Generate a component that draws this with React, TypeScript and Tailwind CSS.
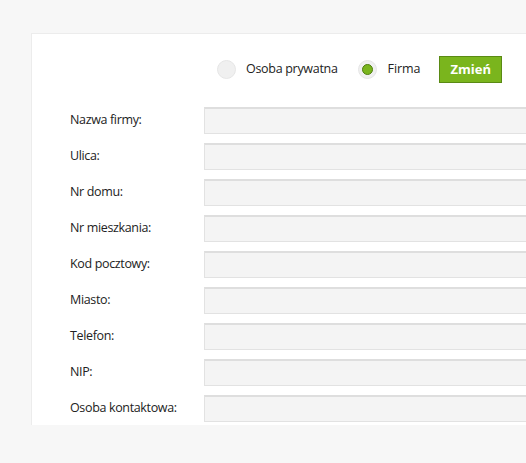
import { useState } from 'react'

const fields = [
  'Nazwa firmy:',
  'Ulica:',
  'Nr domu:',
  'Nr mieszkania:',
  'Kod pocztowy:',
  'Miasto:',
  'Telefon:',
  'NIP:',
  'Osoba kontaktowa:',
]

export default function App() {
  const [kind, setKind] = useState<'private' | 'company'>('company')

  return (
    <div className="w-[526px] h-[463px] overflow-hidden bg-[#f7f7f7] pl-[31px] pt-[33px] font-['Open_Sans',sans-serif] text-[#222]">
      <div className="w-[560px] bg-white border-t border-l border-[#ececec] pb-[3px]">
        <div className="flex items-center h-[27px] mt-[22px] pl-[185px]">
          <button
            onClick={() => setKind('private')}
            className="flex items-center gap-[10px]"
          >
            <span className="w-[19px] h-[19px] rounded-full bg-[#f0f0f0] border border-[#e6e6e6] flex items-center justify-center">
              {kind === 'private' && <span className="w-[10px] h-[10px] rounded-full bg-[#7ab51d] border border-[#5f8f12]" />}
            </span>
            <span className="text-[12.5px] tracking-[-0.3px]">Osoba prywatna</span>
          </button>
          <button
            onClick={() => setKind('company')}
            className="flex items-center gap-[11px] ml-[20px]"
          >
            <span className="w-[19px] h-[19px] rounded-full bg-[#f0f0f0] border border-[#e6e6e6] flex items-center justify-center">
              {kind === 'company' && <span className="w-[11px] h-[11px] rounded-full bg-[#7ab51d] border border-[#4f7d0e]" />}
            </span>
            <span className="text-[12.5px] tracking-[-0.1px]">Firma</span>
          </button>
          <button className="ml-[19px] w-[63px] h-[27px] bg-[#7ab51d] border border-[#5a8a14] text-white text-[13px] font-bold">
            Zmień
          </button>
        </div>
        <div className="mt-[24px] flex flex-col gap-[9px]">
          {fields.map(f => (
            <div key={f} className="flex items-center">
              <label className="w-[172px] pl-[38px] text-[12.5px] tracking-[-0.35px]">{f}</label>
              <input className="flex-1 h-[27px] bg-[#f4f4f4] border border-[#e2e2e2] border-t-2 border-t-[#dedede] outline-none" />
            </div>
          ))}
        </div>
      </div>
    </div>
  )
}
